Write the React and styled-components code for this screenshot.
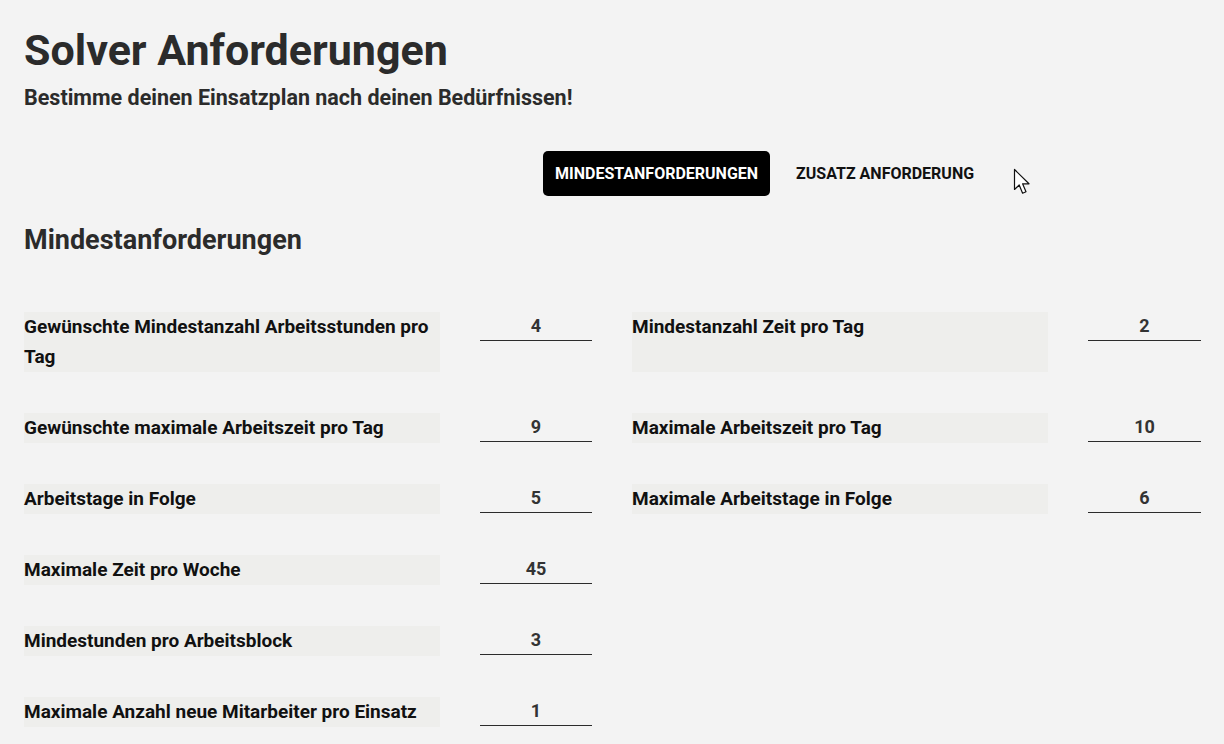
import React, { useState } from "react";
import styled, { createGlobalStyle } from "styled-components";

const GlobalStyle = createGlobalStyle`
  html, body {
    margin: 0;
    padding: 0;
    background: #f3f3f3;
    font-family: Roboto, "Liberation Sans", sans-serif;
  }
`;

const requirements = [
  { label: "Gewünschte Mindestanzahl Arbeitsstunden pro Tag", value: "4" },
  { label: "Mindestanzahl Zeit pro Tag", value: "2" },
  { label: "Gewünschte maximale Arbeitszeit pro Tag", value: "9" },
  { label: "Maximale Arbeitszeit pro Tag", value: "10" },
  { label: "Arbeitstage in Folge", value: "5" },
  { label: "Maximale Arbeitstage in Folge", value: "6" },
  { label: "Maximale Zeit pro Woche", value: "45" },
  null,
  { label: "Mindestunden pro Arbeitsblock", value: "3" },
  null,
  { label: "Maximale Anzahl neue Mitarbeiter pro Einsatz", value: "1" },
  null,
];

function App() {
  const [tab, setTab] = useState(0);

  return (
    <Page>
      <GlobalStyle />
      <Title>Solver Anforderungen</Title>
      <Subtitle>Bestimme deinen Einsatzplan nach deinen Bedürfnissen!</Subtitle>

      <Tabs>
        <Tab active={tab === 0} onClick={() => setTab(0)}>
          Mindestanforderungen
        </Tab>
        <Tab active={tab === 1} onClick={() => setTab(1)}>
          Zusatz Anforderung
        </Tab>
        <Cursor viewBox="0 0 20 28">
          <path
            d="M1.5 1.5 L1.5 21.5 L6.2 17 L9.6 25.2 L13 23.8 L9.6 15.8 L16 15.8 Z"
            fill="#fff"
            stroke="#111"
            strokeWidth="1.2"
            strokeLinejoin="round"
          />
        </Cursor>
      </Tabs>

      <SectionTitle>Mindestanforderungen</SectionTitle>

      <Grid>
        {requirements.map((item, index) =>
          item ? (
            <React.Fragment key={index}>
              <Label>{item.label}</Label>
              <Input defaultValue={item.value} />
            </React.Fragment>
          ) : (
            <React.Fragment key={index}>
              <span />
              <span />
            </React.Fragment>
          )
        )}
      </Grid>
    </Page>
  );
}

export default App;

const Page = styled.div`
  padding: 24px 24px 0 24px;
  color: #2b2b2b;
`;

const Title = styled.h1`
  margin: 0;
  font-size: 43px;
  font-weight: 700;
  line-height: 52px;
  color: #2b2b2b;
`;

const Subtitle = styled.h2`
  margin: 8px 0 0 0;
  font-size: 21.5px;
  font-weight: 700;
  line-height: 28px;
  color: #2b2b2b;
`;

const Tabs = styled.div`
  position: relative;
  display: flex;
  align-items: center;
  gap: 14px;
  margin: 39px 0 0 519px;
`;

const Tab = styled.button`
  height: 45px;
  padding: 0 12px;
  border: none;
  border-radius: 5px;
  background: ${(props) => (props.active ? "#000" : "transparent")};
  color: ${(props) => (props.active ? "#fff" : "#111")};
  font-family: Roboto, "Liberation Sans", sans-serif;
  font-size: 16px;
  font-weight: 700;
  text-transform: uppercase;
  cursor: pointer;
`;

const Cursor = styled.svg`
  position: absolute;
  left: 470px;
  top: 17px;
  width: 20px;
  height: 28px;
`;

const SectionTitle = styled.h3`
  margin: 26px 0 0 0;
  font-size: 27px;
  font-weight: 700;
  line-height: 36px;
  color: #2b2b2b;
`;

const Grid = styled.div`
  display: grid;
  grid-template-columns: 416px 112px 416px 113px;
  column-gap: 40px;
  row-gap: 41px;
  margin-top: 54px;
`;

const Label = styled.div`
  background: #eeeeec;
  font-size: 19px;
  font-weight: 700;
  line-height: 30px;
  color: #111;
`;

const Input = styled.input`
  align-self: start;
  width: 100%;
  box-sizing: border-box;
  height: 29px;
  padding: 0 0 2px 0;
  border: none;
  border-bottom: 1px solid #2b2b2b;
  background: transparent;
  text-align: center;
  font-family: Roboto, "Liberation Sans", sans-serif;
  font-size: 18px;
  font-weight: 700;
  color: #333;
  outline: none;
`;
